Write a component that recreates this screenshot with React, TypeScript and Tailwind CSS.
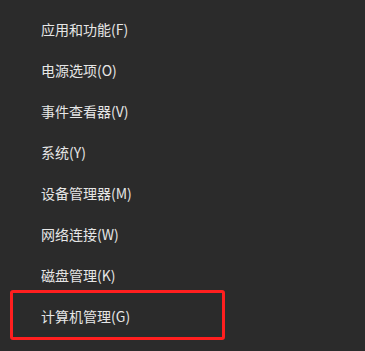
const items = [
  "应用和功能(F)",
  "电源选项(O)",
  "事件查看器(V)",
  "系统(Y)",
  "设备管理器(M)",
  "网络连接(W)",
  "磁盘管理(K)",
  "计算机管理(G)",
];

export default function App() {
  return (
    <div
      className="h-[351px] w-[365px] overflow-hidden bg-[#2b2b2b] pt-[9px] text-[14px] text-[#e6e6e6]"
      style={{ fontFamily: '"Noto Sans CJK SC", "Noto Sans", sans-serif' }}
    >
      <ul>
        {items.map((label, i) => (
          <li key={label} className="relative flex h-[41px] items-center pl-[41px]">
            {label}
            {i === items.length - 1 ? (
              <span className="pointer-events-none absolute top-[-6px] bottom-[-3px] left-[10px] w-[215px] rounded-[3px] border-[3px] border-[#ff1f1f]" />
            ) : null}
          </li>
        ))}
      </ul>
    </div>
  );
}
